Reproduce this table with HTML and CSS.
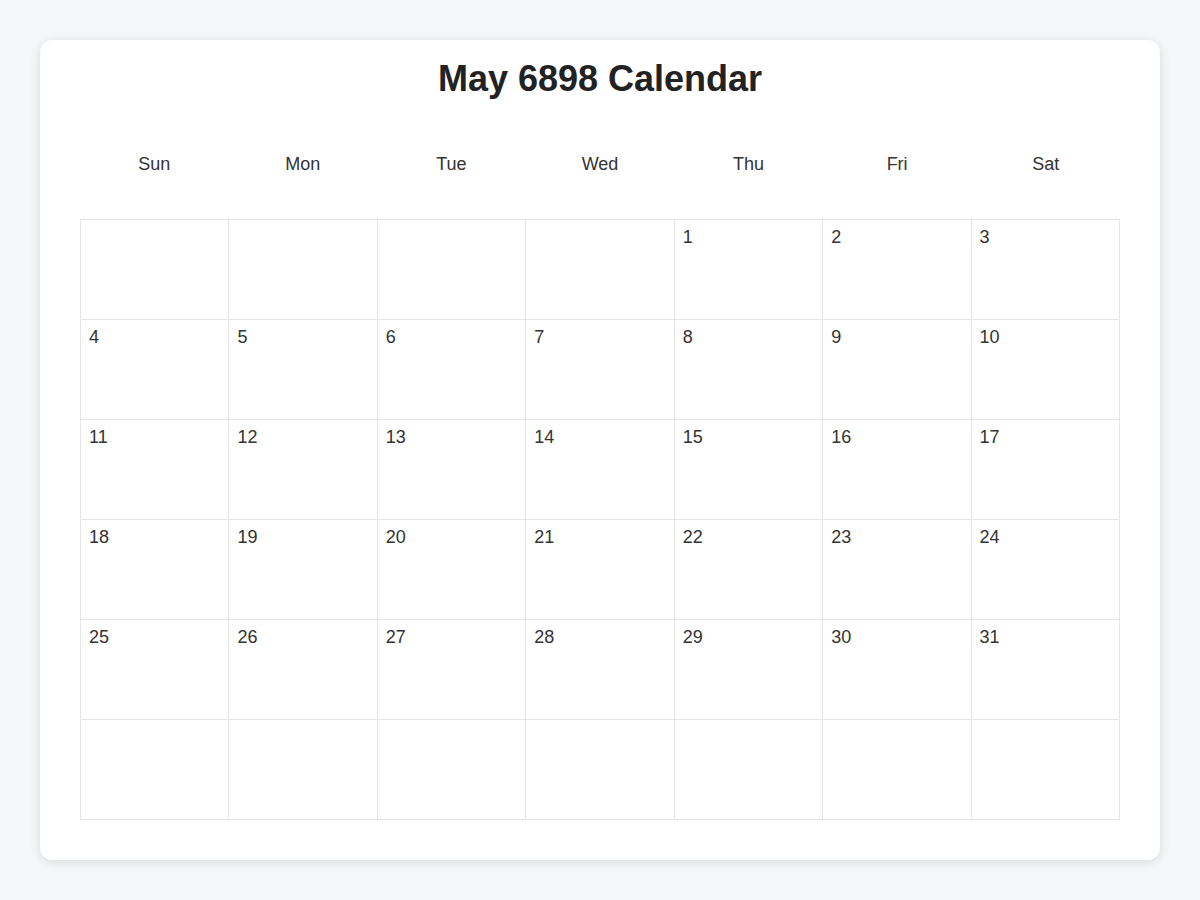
FILE: index.html
```html
<!DOCTYPE html>
<html lang="en">
<head>
<meta charset="utf-8">
<title>May 6898 Calendar</title>
<link rel="stylesheet" href="styles.css">
</head>
<body>
<div class="card">
  <h1 class="title">May 6898 Calendar</h1>
  <div class="weekdays">
    <div class="weekday">Sun</div>
    <div class="weekday">Mon</div>
    <div class="weekday">Tue</div>
    <div class="weekday">Wed</div>
    <div class="weekday">Thu</div>
    <div class="weekday">Fri</div>
    <div class="weekday">Sat</div>
  </div>
  <div class="grid">
    <div class="cell"></div><div class="cell"></div><div class="cell"></div><div class="cell"></div>
    <div class="cell">1</div><div class="cell">2</div><div class="cell">3</div>
    <div class="cell">4</div><div class="cell">5</div><div class="cell">6</div><div class="cell">7</div>
    <div class="cell">8</div><div class="cell">9</div><div class="cell">10</div>
    <div class="cell">11</div><div class="cell">12</div><div class="cell">13</div><div class="cell">14</div>
    <div class="cell">15</div><div class="cell">16</div><div class="cell">17</div>
    <div class="cell">18</div><div class="cell">19</div><div class="cell">20</div><div class="cell">21</div>
    <div class="cell">22</div><div class="cell">23</div><div class="cell">24</div>
    <div class="cell">25</div><div class="cell">26</div><div class="cell">27</div><div class="cell">28</div>
    <div class="cell">29</div><div class="cell">30</div><div class="cell">31</div>
    <div class="cell"></div><div class="cell"></div><div class="cell"></div><div class="cell"></div>
    <div class="cell"></div><div class="cell"></div><div class="cell"></div>
  </div>
</div>
</body>
</html>
```
FILE: styles.css
```css
html, body {
  margin: 0;
  padding: 0;
}
body {
  background: #f6f7f9;
  font-family: "Liberation Sans", Arial, Helvetica, sans-serif;
  color: #333;
  padding: 40px;
}
.card {
  background: #fff;
  border-radius: 12px;
  box-shadow: 0 2px 12px rgba(0, 0, 0, 0.12);
  padding: 17px 40px 40px;
}
.title {
  margin: 0;
  font-size: 36px;
  line-height: 44px;
  font-weight: 700;
  color: #222;
  text-align: center;
}
.weekdays {
  display: grid;
  grid-template-columns: repeat(7, 1fr);
  margin-top: 33px;
  margin-bottom: 25px;
}
.weekday {
  text-align: center;
  font-size: 18px;
  line-height: 20px;
  padding: 20px 0;
}
.grid {
  display: grid;
  grid-template-columns: repeat(7, 1fr);
  grid-auto-rows: 100px;
  border-top: 1px solid #e5e5e5;
  border-left: 1px solid #e5e5e5;
}
.cell {
  border-right: 1px solid #e5e5e5;
  border-bottom: 1px solid #e5e5e5;
  padding: 7px 8px 6px;
  font-size: 18px;
  line-height: 20px;
}
```
